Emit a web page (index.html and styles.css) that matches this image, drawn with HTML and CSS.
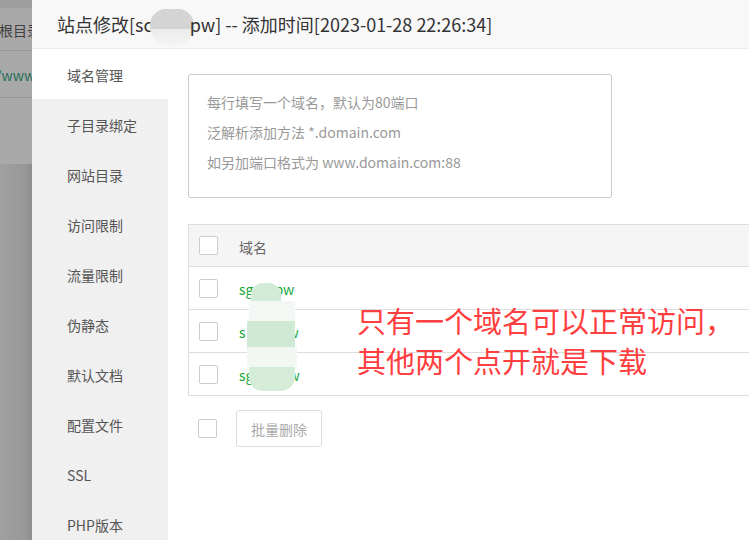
FILE: index.html
```html
<!DOCTYPE html>
<html>
    <head>
        <meta name="viewport" content="width=device-width, initial-scale=1.0">
        <title>站点修改</title>
        <link rel="stylesheet" href="styles.css">
    </head>
    <body>
        <div class="screen">
            <div class="bg-page">
                <div class="bg-top"></div>
                <div class="bg-row">根目录</div>
                <div class="bg-row bg-path">/www</div>
                <div class="bg-gap"></div>
                <div class="bg-rest"></div>
            </div>

            <div class="dialog">
                <div class="dialog-title">
                    站点修改[sc<span class="blur-title"></span>pw] -- 添加时间[2023-01-28 22:26:34]
                </div>
                <div class="dialog-body">
                    <ul class="side-menu">
                        <li class="active">域名管理</li>
                        <li>子目录绑定</li>
                        <li>网站目录</li>
                        <li>访问限制</li>
                        <li>流量限制</li>
                        <li>伪静态</li>
                        <li>默认文档</li>
                        <li>配置文件</li>
                        <li>SSL</li>
                        <li>PHP版本</li>
                    </ul>

                    <div class="main">
                        <div class="domain-input">
                            <p>每行填写一个域名，默认为80端口</p>
                            <p>泛解析添加方法 *.domain.com</p>
                            <p>如另加端口格式为 www.domain.com:88</p>
                        </div>

                        <div class="domain-table">
                            <div class="tr th">
                                <span class="check"></span>
                                <span class="cell">域名</span>
                            </div>
                            <div class="tr">
                                <span class="check"></span>
                                <span class="cell link">sg<span class="hide h1"></span>pw</span>
                            </div>
                            <div class="tr">
                                <span class="check"></span>
                                <span class="cell link">s<span class="hide h2"></span>w</span>
                            </div>
                            <div class="tr">
                                <span class="check"></span>
                                <span class="cell link">sg<span class="hide h3"></span>w</span>
                            </div>
                            <div class="mosaic">
                                <i class="m1"></i>
                                <i class="m2"></i>
                                <i class="m3"></i>
                                <i class="m4"></i>
                                <i class="m5"></i>
                            </div>
                            <div class="note">只有一个域名可以正常访问，<br>其他两个点开就是下载</div>
                        </div>

                        <div class="batch">
                            <span class="check"></span>
                            <button class="btn">批量删除</button>
                        </div>
                    </div>
                </div>
            </div>
        </div>
    </body>
</html>
```

FILE: styles.css
```css
html, body {
    margin: 0;
    padding: 0;
    overflow: hidden;
}
body {
    width: 749px;
    height: 540px;
    background: #a3a3a3;
    font-family: "Noto Sans CJK SC", "Noto Sans", sans-serif;
}
.screen {
    display: flex;
    height: 540px;
}
.bg-page {
    width: 32px;
    flex-shrink: 0;
    display: flex;
    flex-direction: column;
    overflow: hidden;
    white-space: nowrap;
}
.bg-top {
    height: 8px;
    background: #9d9d9d;
}
.bg-row {
    height: 42px;
    line-height: 44px;
    border-bottom: 1px solid #969696;
    background: #a9a9a9;
    color: #3f3f3f;
    font-size: 14px;
    margin-left: -1px;
}
.bg-path {
    height: 46px;
    line-height: 48px;
    color: #1f6e55;
    margin-left: -4px;
}
.bg-gap {
    height: 66px;
    background: #a9a9a9;
}
.bg-rest {
    flex: 1;
    background: linear-gradient(to right, #a0a0a0, #989898 80%, #8c8c8c);
}

.dialog {
    width: 760px;
    flex-shrink: 0;
    background: #fff;
    display: flex;
    flex-direction: column;
}
.dialog-title {
    height: 48px;
    line-height: 48px;
    padding-left: 25px;
    background: #f8f8f8;
    border-bottom: 1px solid #ebebeb;
    font-size: 18px;
    color: #333;
    white-space: nowrap;
}
.blur-title {
    display: inline-block;
    width: 44px;
    height: 36px;
    vertical-align: middle;
    margin: 0 -4px 0 -3px;
    border-radius: 16px 16px 18px 18px;
    background: linear-gradient(#d4d4d4 0, #d4d4d4 55%, #ececec 55%, #f3f3f3 100%);
}
.dialog-body {
    display: flex;
    flex: 1;
}
.side-menu {
    list-style: none;
    margin: 0;
    padding: 0;
    width: 136px;
    background: #f0f0f0;
}
.side-menu li {
    height: 50px;
    line-height: 52px;
    padding-left: 35px;
    font-size: 14px;
    color: #555;
}
.side-menu li.active {
    background: #fff;
}

.main {
    flex: 1;
    padding: 25px 0 0 20px;
}
.domain-input {
    width: 404px;
    height: 110px;
    padding: 12px 0 0 18px;
    border: 1px solid #ccc;
    border-radius: 2px;
}
.domain-input p {
    margin: 0;
    line-height: 30px;
    font-size: 14px;
    color: #999;
}

.domain-table {
    position: relative;
    margin-top: 26px;
    border: 1px solid #ddd;
    border-bottom: none;
}
.tr {
    display: flex;
    align-items: center;
    height: 42px;
    border-bottom: 1px solid #ddd;
    font-size: 14px;
}
.th {
    height: 41px;
    background: #f5f5f5;
    color: #666;
}
.check {
    display: inline-block;
    box-sizing: border-box;
    width: 19px;
    height: 19px;
    border: 1px solid #ccc;
    border-radius: 2px;
    background: #fff;
    margin: 0 21px 0 10px;
}
.cell {
    white-space: nowrap;
    padding-top: 2px;
}
.link {
    color: #20a53a;
}
.hide {
    display: inline-block;
}
.h1 {
    width: 21px;
}
.h2 {
    width: 42px;
}
.h3 {
    width: 35px;
}
.mosaic {
    position: absolute;
    left: 58px;
    top: 58px;
    width: 54px;
    height: 108px;
}
.mosaic i {
    display: block;
}
.mosaic .m1 {
    width: 30px;
    height: 18px;
    margin-left: 4px;
    border-radius: 12px 12px 0 0;
    background: #d3ecd8;
}
.mosaic .m2 {
    width: 46px;
    height: 20px;
    margin-left: 2px;
    background: #f4f8f5;
}
.mosaic .m3 {
    width: 48px;
    height: 26px;
    background: #cfe9d5;
}
.mosaic .m4 {
    width: 50px;
    height: 20px;
    background: #f3f7f4;
}
.mosaic .m5 {
    width: 46px;
    height: 24px;
    margin-left: 2px;
    border-radius: 0 0 14px 14px;
    background: #d5ecd9;
}
.note {
    position: absolute;
    left: 168px;
    top: 75px;
    font-size: 29px;
    line-height: 40px;
    color: #ff3f3f;
    white-space: nowrap;
}

.batch {
    display: flex;
    align-items: center;
    margin-top: 14px;
}
.batch .check {
    margin-right: 19px;
}
.btn {
    height: 37px;
    padding: 0 14px;
    border: 1px solid #ddd;
    border-radius: 3px;
    background: #fff;
    color: #aaa;
    font-size: 14px;
    font-family: "Noto Sans CJK SC", sans-serif;
}
```
